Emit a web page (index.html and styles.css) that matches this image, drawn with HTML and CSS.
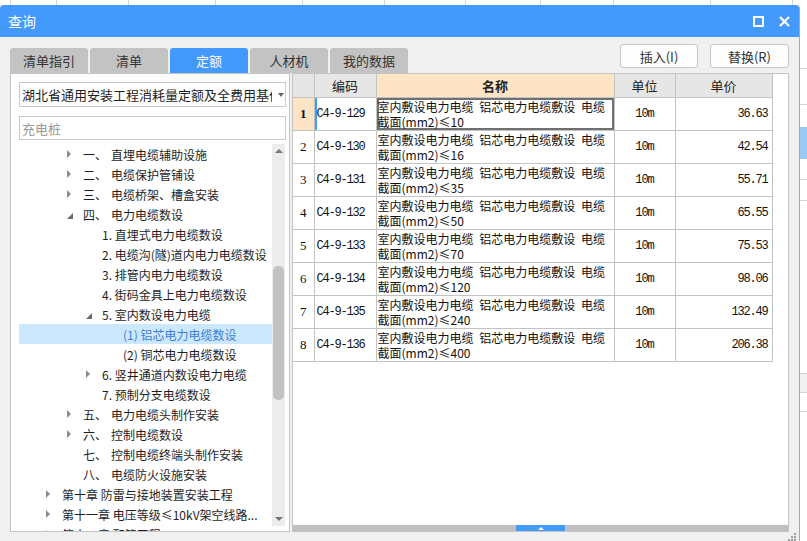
FILE: index.html
```html
<!DOCTYPE html>
<html lang="zh">
<head>
<meta charset="utf-8">
<title>查询</title>
<link rel="stylesheet" href="styles.css">
</head>
<body>
<div class="app">
  <div class="topstrip">
    <div class="tc" style="width:11px"></div>
    <div class="tc" style="width:46px"></div>
    <div class="tc" style="width:72px"></div>
    <div class="tc" style="width:87px"></div>
    <div class="tc" style="width:87px"></div>
    <div class="tc" style="width:82px"></div>
    <div class="tc" style="width:81px"></div>
    <div class="tc" style="width:75px"></div>
    <div class="tc" style="width:73px"></div>
    <div class="tc" style="width:97px"></div>
    <div class="tc" style="width:82px"></div>
  </div>
  <div class="dialog">
    <div class="titlebar">
      <span class="title">查询</span>
      <span class="tb-icons">
        <svg width="11" height="11" viewBox="0 0 11 11"><rect x="1" y="1" width="9" height="9" fill="none" stroke="#fff" stroke-width="2"/></svg>
        <svg width="11" height="11" viewBox="0 0 11 11"><path d="M1 1 L10 10 M10 1 L1 10" stroke="#fff" stroke-width="2.2" fill="none"/></svg>
      </span>
    </div>
    <div class="body">
      <div class="toprow">
        <div class="tabs">
          <div class="tab">清单指引</div>
          <div class="tab">清单</div>
          <div class="tab active">定额</div>
          <div class="tab">人材机</div>
          <div class="tab">我的数据</div>
        </div>
        <div class="btns">
          <div class="btn">插入(I)</div>
          <div class="btn wide">替换(R)</div>
        </div>
      </div>
      <div class="main">
        <div class="leftpanel">
          <div class="select">
            <span class="select-text">湖北省通用安装工程消耗量定额及全费用基价表(2018)</span>
            <span class="select-arrow"></span>
          </div>
          <div class="search">充电桩</div>
          <div class="tree">
            <div class="tree-list">
              <div class="row lv2"><span class="tg"><i class="col"></i></span><span class="num">一、</span>直埋电缆辅助设施</div>
              <div class="row lv2"><span class="tg"><i class="col"></i></span><span class="num">二、</span>电缆保护管铺设</div>
              <div class="row lv2"><span class="tg"><i class="col"></i></span><span class="num">三、</span>电缆桥架、槽盒安装</div>
              <div class="row lv2"><span class="tg"><i class="exp"></i></span><span class="num">四、</span>电力电缆数设</div>
              <div class="row lv3"><span class="tg"></span>1. 直埋式电力电缆数设</div>
              <div class="row lv3"><span class="tg"></span>2. 电缆沟(隧)道内电力电缆数设</div>
              <div class="row lv3"><span class="tg"></span>3. 排管内电力电缆数设</div>
              <div class="row lv3"><span class="tg"></span>4. 街码金具上电力电缆数设</div>
              <div class="row lv3"><span class="tg"><i class="exp"></i></span>5. 室内数设电力电缆</div>
              <div class="row lv4 sel"><span class="tg"></span>(1) 铝芯电力电缆数设</div>
              <div class="row lv4"><span class="tg"></span>(2) 铜芯电力电缆数设</div>
              <div class="row lv3"><span class="tg"><i class="col"></i></span>6. 竖井通道内数设电力电缆</div>
              <div class="row lv3"><span class="tg"></span>7. 预制分支电缆数设</div>
              <div class="row lv2"><span class="tg"><i class="col"></i></span><span class="num">五、</span>电力电缆头制作安装</div>
              <div class="row lv2"><span class="tg"><i class="col"></i></span><span class="num">六、</span>控制电缆数设</div>
              <div class="row lv2"><span class="tg"></span><span class="num">七、</span>控制电缆终端头制作安装</div>
              <div class="row lv2"><span class="tg"></span><span class="num">八、</span>电缆防火设施安装</div>
              <div class="row lv1"><span class="tg"><i class="col"></i></span>第十章 防雷与接地装置安装工程</div>
              <div class="row lv1"><span class="tg"><i class="col"></i></span>第十一章 电压等级≤10kV架空线路...</div>
              <div class="row lv1"><span class="tg"><i class="col"></i></span>第十二章 配管工程</div>
            </div>
            <div class="vscroll">
              <span class="arr up"></span>
              <div class="vtrack"><div class="vthumb"></div></div>
              <span class="arr down"></span>
            </div>
          </div>
        </div>
        <div class="rightpanel">
          <table class="grid">
            <colgroup>
              <col style="width:21px"><col style="width:62px"><col style="width:238px"><col style="width:61px"><col style="width:97px">
            </colgroup>
            <thead>
              <tr><th></th><th>编码</th><th class="hsel">名称</th><th>单位</th><th>单价</th></tr>
            </thead>
            <tbody>
              <tr class="cur"><td class="rn">1</td><td class="code">C4-9-129</td><td class="name">室内敷设电力电缆 铝芯电力电缆敷设 电缆<br>截面(mm2)≤10</td><td class="unit">10m</td><td class="price">36.63</td></tr>
              <tr><td class="rn">2</td><td class="code">C4-9-130</td><td class="name">室内敷设电力电缆 铝芯电力电缆敷设 电缆<br>截面(mm2)≤16</td><td class="unit">10m</td><td class="price">42.54</td></tr>
              <tr><td class="rn">3</td><td class="code">C4-9-131</td><td class="name">室内敷设电力电缆 铝芯电力电缆敷设 电缆<br>截面(mm2)≤35</td><td class="unit">10m</td><td class="price">55.71</td></tr>
              <tr><td class="rn">4</td><td class="code">C4-9-132</td><td class="name">室内敷设电力电缆 铝芯电力电缆敷设 电缆<br>截面(mm2)≤50</td><td class="unit">10m</td><td class="price">65.55</td></tr>
              <tr><td class="rn">5</td><td class="code">C4-9-133</td><td class="name">室内敷设电力电缆 铝芯电力电缆敷设 电缆<br>截面(mm2)≤70</td><td class="unit">10m</td><td class="price">75.53</td></tr>
              <tr><td class="rn">6</td><td class="code">C4-9-134</td><td class="name">室内敷设电力电缆 铝芯电力电缆敷设 电缆<br>截面(mm2)≤120</td><td class="unit">10m</td><td class="price">98.06</td></tr>
              <tr><td class="rn">7</td><td class="code">C4-9-135</td><td class="name">室内敷设电力电缆 铝芯电力电缆敷设 电缆<br>截面(mm2)≤240</td><td class="unit">10m</td><td class="price">132.49</td></tr>
              <tr><td class="rn">8</td><td class="code">C4-9-136</td><td class="name">室内敷设电力电缆 铝芯电力电缆敷设 电缆<br>截面(mm2)≤400</td><td class="unit">10m</td><td class="price">206.38</td></tr>
            </tbody>
          </table>
          <div class="spacer"></div>
          <div class="hbar"><div class="hthumb"><span class="hthumb-arrow"></span></div></div>
        </div>
      </div>
      <div class="grip">
        <svg width="10" height="8" viewBox="0 0 10 8"><g fill="#a0a0a0"><rect x="7" y="0" width="2" height="2"/><rect x="4" y="3" width="2" height="2"/><rect x="7" y="3" width="2" height="2"/><rect x="1" y="6" width="2" height="2"/><rect x="4" y="6" width="2" height="2"/><rect x="7" y="6" width="2" height="2"/></g></svg>
      </div>
    </div>
  </div>
  <div class="sidestrip">
    <div class="ss line" style="height:64px"></div>
    <div class="ss line" style="height:36px"></div>
    <div class="ss" style="height:22px"></div>
    <div class="ss blue" style="height:32px"></div>
    <div class="ss line" style="height:21px"></div>
    <div class="ss line" style="height:21px"></div>
    <div class="ss" style="height:172px"></div>
    <div class="ss grey" style="height:20px"></div>
    <div class="ss line" style="height:19px"></div>
  </div>
</div>
</body>
</html>
```

FILE: styles.css
```css
* { box-sizing: border-box; }
html, body { margin: 0; padding: 0; }
body {
  width: 807px;
  height: 541px;
  overflow: hidden;
  background: #ffffff;
  font-family: "Noto Sans CJK SC", "Noto Sans", sans-serif;
  color: #1e1e1e;
}
.app {
  display: grid;
  grid-template-columns: 800px 7px;
  grid-template-rows: 5px 536px;
}
.topstrip {
  grid-column: 1 / 3;
  display: flex;
  background: #fff;
}
.tc { height: 5px; border-right: 1px solid #d4d4d4; flex: none; }

.dialog {
  background: #f0f0f0;
  border-right: 1px solid #a9a9a9;
  border-radius: 4px 4px 0 0;
  display: flex;
  flex-direction: column;
  overflow: hidden;
}
.titlebar {
  height: 32px;
  flex: none;
  background: #4499fc;
  display: flex;
  align-items: center;
  padding: 0 9px 0 8px;
}
.title { color: #fff; font-size: 14px; line-height: 1; }
.tb-icons { margin-left: auto; display: flex; gap: 15px; align-items: center; }
.tb-icons svg { display: block; }

.body { flex: 1; display: flex; flex-direction: column; padding: 0 10px 0 10px; }
.toprow { height: 36px; display: flex; align-items: flex-end; flex: none; }
.tabs { display: flex; gap: 2px; }
.tab {
  width: 78px;
  height: 25px;
  background: #c3c3c3;
  border-radius: 3px 3px 0 0;
  font-size: 13px;
  color: #333;
  display: flex;
  align-items: center;
  justify-content: center;
}
.tab.active { background: #4499fc; color: #fff; }
.btns { margin-left: auto; display: flex; gap: 12px; margin-bottom: 5px; }
.btn {
  width: 78px;
  height: 24px;
  background: #fdfdfd;
  border: 1px solid #c6c6c6;
  border-radius: 3px;
  font-size: 13px;
  color: #333;
  display: flex;
  align-items: center;
  justify-content: center;
}
.btn.wide { width: 79px; }

.main { height: 459px; display: flex; gap: 2px; flex: none; }
.leftpanel {
  width: 280px;
  background: #fff;
  border: 1px solid #c4c4c4;
  display: flex;
  flex-direction: column;
  padding: 8px 3px 0 8px;
}
.select {
  width: 267px;
  height: 25px;
  border: 1px solid #c9c9c9;
  display: flex;
  align-items: center;
  padding-left: 2px;
  overflow: hidden;
}
.select-text { font-size: 13px; white-space: nowrap; overflow: hidden; width: 250px; color: #1e1e1e; }
.select-arrow {
  margin-left: 6px;
  width: 0; height: 0;
  border-left: 3.5px solid transparent;
  border-right: 3.5px solid transparent;
  border-top: 4px solid #666;
}
.search {
  width: 267px;
  height: 24px;
  margin-top: 9px;
  border: 1px solid #c9c9c9;
  font-size: 13px;
  color: #9a9a9a;
  display: flex;
  align-items: center;
  padding-left: 2px;
}
.tree { flex: 1; margin-top: 4px; display: flex; overflow: hidden; }
.tree-list { width: 253px; overflow: hidden; }
.row {
  height: 20px;
  display: flex;
  align-items: center;
  font-size: 12px;
  white-space: nowrap;
  color: #1e1e1e;
}
.row.lv1 { padding-left: 27px; }
.row.lv2 { padding-left: 48px; }
.row.lv3 { padding-left: 67px; }
.row.lv4 { padding-left: 88px; }
.row.sel { background: #cce8ff; color: #3d80d6; }
.tg { width: 16px; flex: none; display: flex; align-items: center; height: 20px; }
.num { width: 28px; flex: none; }
.col {
  display: block;
  width: 0; height: 0;
  border-top: 4px solid transparent;
  border-bottom: 4px solid transparent;
  border-left: 4px solid #8c8c8c;
}
.exp {
  display: block;
  width: 0; height: 0;
  margin-top: 3px;
  border-bottom: 6px solid #6a6a6a;
  border-left: 6px solid transparent;
}
.vscroll {
  width: 13px;
  background: #ececec;
  display: flex;
  flex-direction: column;
  align-items: center;
  height: 382px;
}
.arr { flex: none; width: 0; height: 0; margin: 5px 0; border-left: 4px solid transparent; border-right: 4px solid transparent; }
.arr.up { border-bottom: 4px solid #777; }
.arr.down { border-top: 4px solid #777; }
.vtrack { flex: 1; width: 100%; padding: 108px 1px 0 1px; }
.vthumb { height: 134px; background: #c1c1c1; border-radius: 5px; }

.rightpanel {
  width: 497px;
  background: #fff;
  border: 1px solid #c4c4c4;
  display: flex;
  flex-direction: column;
}
.grid {
  border-collapse: collapse;
  table-layout: fixed;
  width: 479px;
  font-size: 12px;
}
.grid th {
  height: 23px;
  background: #e6e6e6;
  border: 1px solid #c3c3c3;
  border-top: none;
  font-weight: normal;
  font-size: 13px;
  color: #222;
  padding: 0;
}
.grid th:first-child { border-left: none; }
.grid th.hsel { background: #fde4c4; font-weight: bold; }
.grid td {
  height: 33px;
  border: 1px solid #c3c3c3;
  padding: 0;
  vertical-align: middle;
  color: #111;
}
.grid td:first-child { border-left: none; }
.rn { text-align: center; font-family: "Liberation Serif", serif; font-size: 13px; }
.cur .rn { background: #fde4c4; font-weight: bold; }
.code {
  font-family: "Liberation Mono", monospace;
  font-size: 12px;
  letter-spacing: -1.2px;
  padding-left: 2px !important;
}
.cur .code { box-shadow: inset 2px 0 0 #4499fc; }
.name {
  vertical-align: top !important;
  padding: 1px 0 0 1px !important;
  line-height: 15px;
  font-size: 12px;
  word-spacing: 3px;
  white-space: nowrap;
  overflow: hidden;
}
.cur .name { box-shadow: inset 0 0 0 2px #707070; }
.unit { text-align: center; font-family: "Liberation Mono", monospace; letter-spacing: -1px; }
.price {
  text-align: right;
  font-family: "Liberation Mono", monospace;
  letter-spacing: -1.2px;
  padding-right: 4px !important;
}
.spacer { flex: 1; }
.hbar {
  height: 6px;
  background: #c0c0c0;
  display: flex;
  justify-content: center;
  flex: none;
}
.hthumb {
  width: 49px;
  height: 6px;
  background: #4499fc;
  display: flex;
  justify-content: center;
  align-items: center;
}
.hthumb-arrow {
  width: 0; height: 0;
  border-left: 3px solid transparent;
  border-right: 3px solid transparent;
  border-bottom: 3px solid #fff;
}
.grip { height: 9px; display: flex; justify-content: flex-end; align-items: flex-end; margin-right: -8px; }
.grip svg { display: block; }

.sidestrip { background: #fff; display: flex; flex-direction: column; }
.ss { flex: none; }
.ss.line { border-bottom: 1px solid #d4d4d4; }
.ss.blue { background: #99c8f4; }
.ss.grey { background: #f0f0f0; border-top: 1px solid #d4d4d4; border-bottom: 1px solid #d4d4d4; }
```
